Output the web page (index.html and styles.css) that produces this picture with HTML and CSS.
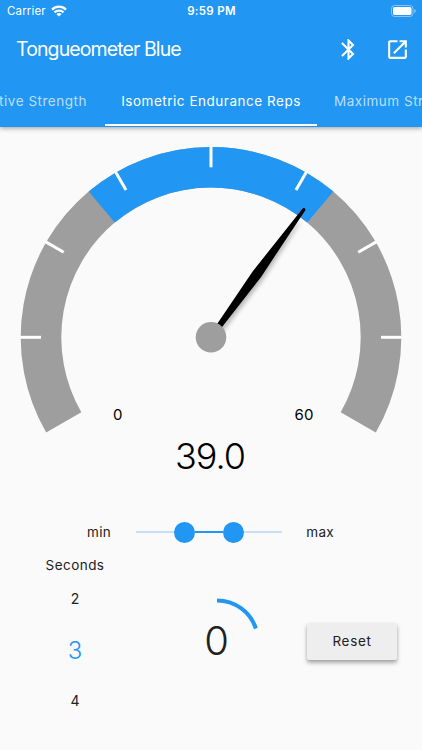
FILE: index.html
```html
<!DOCTYPE html>
<html lang="en">
<head>
<meta charset="utf-8">
<title>Tongueometer Blue</title>
<link rel="stylesheet" href="styles.css">
</head>
<body>
<header class="appbar">
  <div class="status">
    <div class="carrier"><span>Carrier</span>
      <svg width="16" height="12" viewBox="0 0 16 12" fill="none" stroke="#fff" stroke-width="2.200"><path d="M1 4.600C5 .7 11 .7 15 4.600M3.500 7.400C6 5 10 5 12.500 7.400"/><path d="M8 11.600 5.400 9Q8 7 10.600 9Z" fill="#fff" stroke="none"/></svg>
    </div>
    <div class="clock">9:59 PM</div>
    <svg class="battery" width="25" height="12" viewBox="0 0 25 12"><rect x=".5" y=".5" width="21.500" height="11" rx="3.200" fill="none" stroke="#fff" stroke-opacity=".45"/><rect x="2" y="2" width="18.500" height="8" rx="1.800" fill="#fff"/><path d="M23.300 4v4q1.400-.6 1.400-2t-1.400-2" fill="#fff" fill-opacity=".5"/></svg>
  </div>
  <div class="toolbar">
    <h1>Tongueometer Blue</h1>
    <svg class="icon" viewBox="0 0 24 24"><path d="M17.710 7.710 12 2h-1v7.590L6.410 5 5 6.410 10.590 12 5 17.590 6.410 19 11 14.410V22h1l5.710-5.710-4.300-4.290zM13 5.830l1.880 1.880L13 9.590zm1.880 10.460L13 18.170v-3.760z"/></svg>
    <svg class="icon" viewBox="0 0 24 24"><path d="M19 19H5V5h7V3H5c-1.110 0-2 .9-2 2v14c0 1.100.89 2 2 2h14c1.100 0 2-.9 2-2v-7h-2zM14 3v2h3.590l-9.830 9.830 1.410 1.410L19 6.410V10h2V3z"/></svg>
  </div>
  <nav class="tabs">
    <span class="tab tab-prev">Repetitive Strength</span>
    <span class="tab tab-active">Isometric Endurance Reps</span>
    <span class="tab tab-next">Maximum Strength</span>
  </nav>
</header>
<main>
  <svg class="gauge" width="422" height="363" viewBox="0 127 422 363">
    <defs><filter id="shadow" x="-100%" y="-20%" width="300%" height="140%"><feGaussianBlur stdDeviation="2"/></filter></defs>
    <g fill="none" stroke-width="40.600">
      <path stroke="#9e9e9e" d="M63.780 422.300A170 170 0 1 1 358.220 422.300"/>
      <path stroke="#2196f3" d="M101.730 207.070A170 170 0 0 1 320.270 207.070"/>
    </g>
    <g stroke="#fff" stroke-width="3">
      <path id="tick" d="M211 146.500V167.300"/>
      <use href="#tick" transform="rotate(-90 211 337.300)"/>
      <use href="#tick" transform="rotate(-60 211 337.300)"/>
      <use href="#tick" transform="rotate(-30 211 337.300)"/>
      <use href="#tick" transform="rotate(30 211 337.300)"/>
      <use href="#tick" transform="rotate(60 211 337.300)"/>
      <use href="#tick" transform="rotate(90 211 337.300)"/>
    </g>
    <path transform="translate(213.500 340) rotate(36)" d="M-2.500-12-4.500-80-1-145 1-145 4.500-80 2.500-12Z" fill="#000" fill-opacity=".28" filter="url(#shadow)"/>
    <path transform="translate(211 337.300) rotate(36)" d="M-3 0-3-18-5-78-1.600-158.500Q0-160.600 1.600-158.500L5-78 3-18 3 0Z"/>
    <circle cx="211" cy="337.300" r="15.300" fill="#9e9e9e"/>
    <g class="gauge-text" text-anchor="middle">
      <text x="117.700" y="419.500">0</text>
      <text x="304" y="419.500">60</text>
      <text class="reading" x="210" y="469">39.0</text>
    </g>
  </svg>
  <div class="range">
    <span>min</span>
    <div class="track"><i class="thumb"></i><i class="span"></i><i class="thumb"></i></div>
    <span>max</span>
  </div>
  <div class="controls">
    <section class="seconds">
      <div class="label">Seconds</div>
      <div class="option">2</div>
      <div class="option selected">3</div>
      <div class="option">4</div>
    </section>
    <svg class="counter" width="84" height="84" viewBox="0 0 84 84"><path d="M42 2.500A41 41 0 0 1 80.900 30.500" fill="none" stroke="#2196f3" stroke-width="4"/><text x="41.700" y="57" text-anchor="middle">0</text></svg>
    <button class="reset">Reset</button>
  </div>
</main>
</body>
</html>
```
FILE: styles.css
```css
* { box-sizing: border-box; }
body {
  margin: 0;
  width: 422px;
  height: 750px;
  overflow: hidden;
  background: #fafafa;
  color: #212121;
  font-family: Inter, "Liberation Sans", sans-serif;
  font-size: 14px;
}
.appbar {
  height: 127px;
  background: #2196f3;
  color: #fff;
  box-shadow: 0 1px 5px rgba(0, 0, 0, .4);
  position: relative;
}
.status {
  height: 22px;
  display: grid;
  grid-template-columns: 1fr auto 1fr;
  align-items: center;
  padding: 0 6px 0 7px;
  font-size: 11.500px;
}
.carrier { display: flex; align-items: center; gap: 5px; letter-spacing: .15px; }
.clock { font-weight: 600; letter-spacing: .3px; }
.battery { justify-self: end; }
.toolbar {
  height: 54px;
  display: flex;
  align-items: center;
  padding: 0 12px 0 16px;
}
h1 {
  flex: 1;
  margin: 0;
  font-size: 19.500px;
  font-weight: 400;
  letter-spacing: -.9px;
}
.icon { width: 25px; height: 25px; fill: #fff; }
.icon + .icon { margin-left: 24px; }
.tabs {
  height: 50px;
  width: 422px;
  overflow: hidden;
  display: flex;
}
.tab {
  flex: none;
  line-height: 50px;
  white-space: nowrap;
  text-align: center;
  font-size: 13.500px;
  letter-spacing: .52px;
  color: rgba(255, 255, 255, .7);
}
.tab-prev { width: 105px; display: flex; justify-content: flex-end; padding-right: 18px; }
.tab-active { width: 212px; color: #fff; border-bottom: 2px solid #fff; }
.tab-next { padding-left: 17px; }
.gauge { display: block; margin-top: 0; }
.gauge-text { font-size: 15px; fill: #000; }
.gauge-text .reading { font-size: 36px; font-weight: 300; letter-spacing: -1px; }
.range {
  height: 84px;
  display: grid;
  grid-template-columns: 49px 146px 52px;
  justify-content: center;
  align-items: center;
  font-size: 13.500px;
  letter-spacing: .3px;
  padding-right: 1px;
}
.range span { margin-top: -1px; }
.range span:last-child { text-align: right; }
.track {
  height: 2px;
  background: #c5e0f7;
  display: flex;
  align-items: center;
  padding-left: 38px;
}
.thumb { width: 21px; height: 21px; border-radius: 50%; background: #2196f3; }
.span { width: 28px; height: 2px; background: #2196f3; }
.controls {
  height: 176px;
  display: flex;
  align-items: flex-start;
  margin-top: -16px;
}
.seconds { width: 150px; text-align: center; }
.label { line-height: 14px; font-size: 13.500px; letter-spacing: .45px; height: 15px; }
.option { height: 51px; line-height: 51px; }
.selected { font-size: 24px; line-height: 53px; font-weight: 300; color: #2196f3; }
.counter { margin: 40px 0 0 25px; flex: none; }
.counter text { font-size: 40px; font-weight: 300; fill: #212121; }
.reset {
  width: 90px;
  height: 37px;
  margin: 65px 0 0 48px;
  padding: 0 0 1px;
  border: 0;
  border-radius: 2px;
  background: #eee;
  color: #212121;
  font: 13.500px Inter, "Liberation Sans", sans-serif;
  letter-spacing: .65px;
  box-shadow: 0 3px 4px rgba(0, 0, 0, .3), 0 1px 3px rgba(0, 0, 0, .1);
}
```
